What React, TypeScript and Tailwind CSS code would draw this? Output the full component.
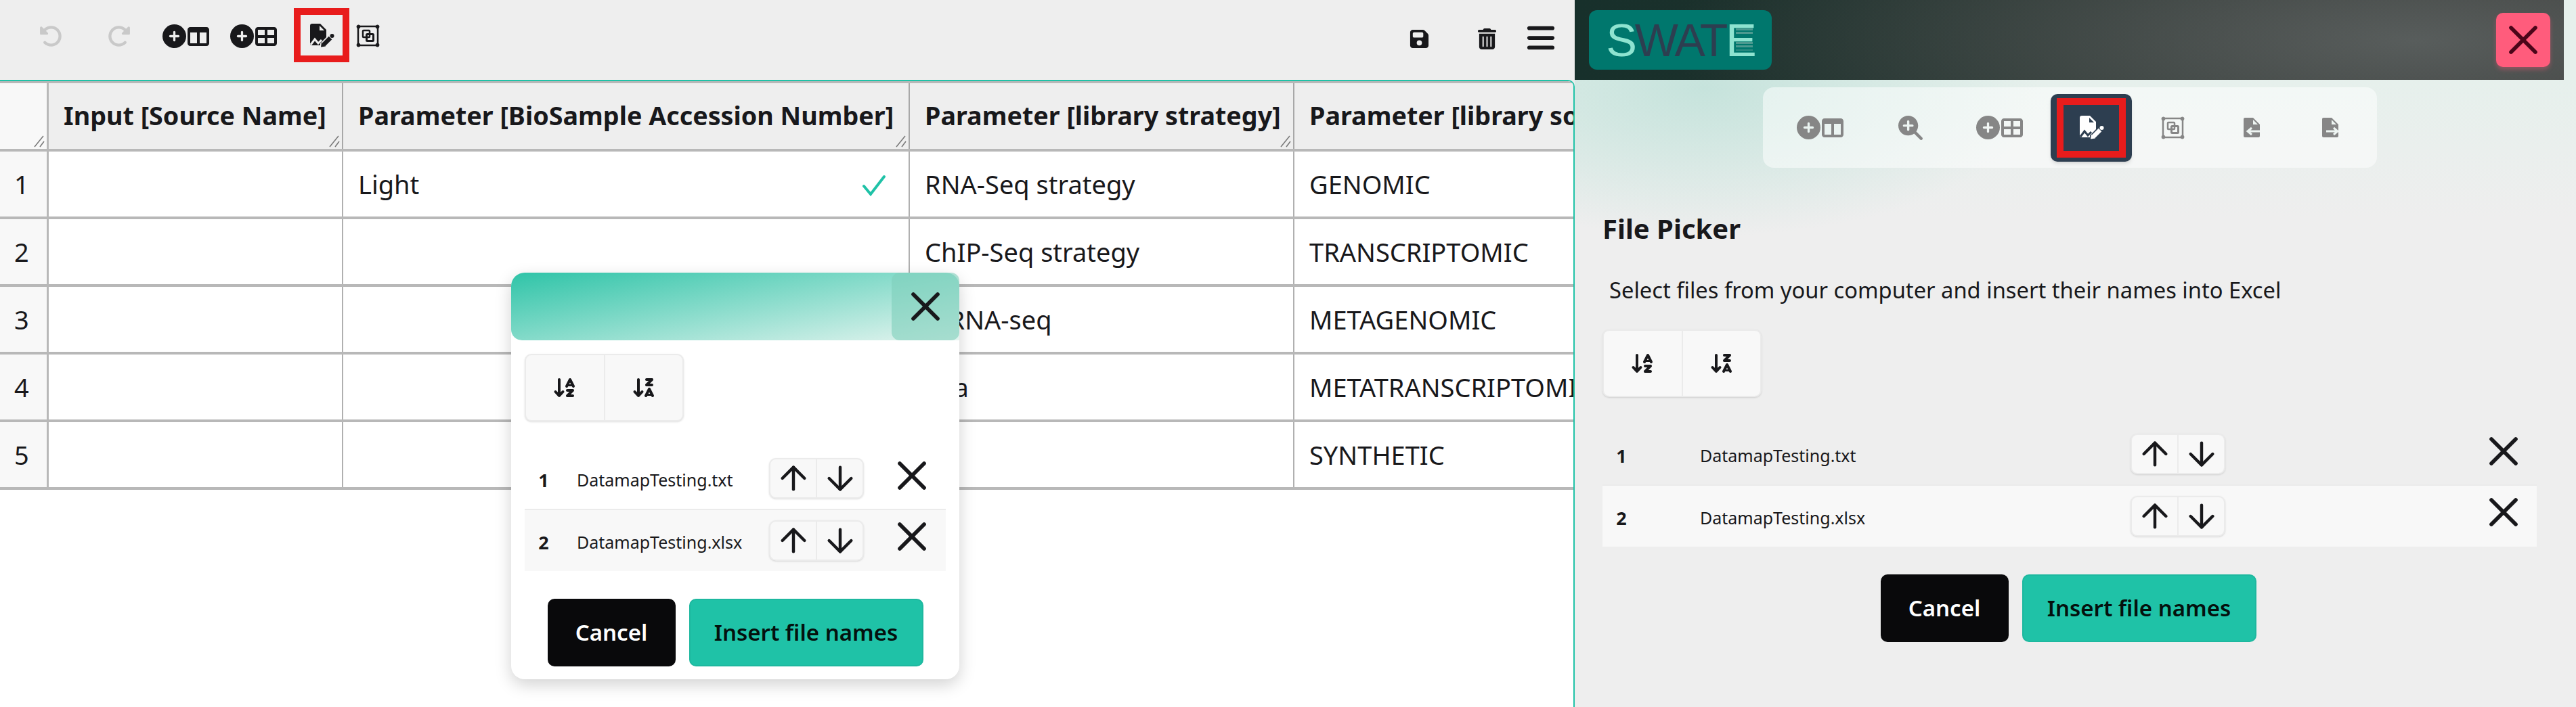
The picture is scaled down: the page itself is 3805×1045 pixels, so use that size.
import React from 'react';
import { ArrowDown, ArrowUp, X } from 'lucide-react';
import {
  FaRotateLeft,
  FaRotateRight,
  FaCirclePlus,
  FaTableColumns,
  FaTableCellsLarge,
  FaFloppyDisk,
  FaTrashCan,
  FaBars,
  FaMagnifyingGlassPlus,
  FaArrowDownAZ,
  FaArrowDownZA,
} from 'react-icons/fa6';

const columns = [
  { title: 'Input [Source Name]', width: 'w-[435px]' },
  { title: 'Parameter [BioSample Accession Number]', width: 'w-[837px]' },
  { title: 'Parameter [library strategy]', width: 'w-[568px]' },
  { title: 'Parameter [library source]', width: 'w-[560px]' },
];

const rows = [
  ['', 'Light', 'RNA-Seq strategy', 'GENOMIC'],
  ['', '', 'ChIP-Seq strategy', 'TRANSCRIPTOMIC'],
  ['', '', 'mRNA-seq', 'METAGENOMIC'],
  ['', '', 'Ota', 'METATRANSCRIPTOMIC'],
  ['', '', '', 'SYNTHETIC'],
];

const files = ['DatamapTesting.txt', 'DatamapTesting.xlsx'];

const ResizeGrip = () => (
  <svg className="absolute right-[2px] bottom-[2px]" width="18" height="18" viewBox="0 0 18 18" fill="none" stroke="#777" strokeWidth="1.5">
    <path d="M2 17 L15 1" />
    <path d="M10 17 L16 9" />
  </svg>
);

// file with a signature squiggle and a pen, cut = colour behind the icon
const FileSign = ({ cut }: { cut: string }) => (
  <svg width="37" height="35" viewBox="0 0 37 35">
    <path fill="currentColor" d="M1 3a3 3 0 0 1 3-3h12l9 9v11l-9 9v3H4a3 3 0 0 1-3-3z" />
    <path fill={cut} d="M15 3l7 7h-7z" />
    <path fill="none" stroke={cut} strokeWidth="3" d="M2 31l6-8 5 6 5-5" />
    <path fill="none" stroke="currentColor" strokeWidth="6.5" d="M21 31L31 21" />
    <path fill="currentColor" d="M17 34.5l1-7 6 6z" />
    <circle cx="33.5" cy="18" r="3" fill="currentColor" />
  </svg>
);

const ObjectFrame = () => (
  <svg width="35" height="34" viewBox="0 0 35 34" fill="none" stroke="currentColor">
    <rect x="3" y="3" width="29" height="28" strokeWidth="2.5" />
    <circle cx="3.5" cy="3.5" r="2.5" fill="currentColor" />
    <circle cx="31.5" cy="3.5" r="2.5" fill="currentColor" />
    <circle cx="3.5" cy="30.5" r="2.5" fill="currentColor" />
    <circle cx="31.5" cy="30.5" r="2.5" fill="currentColor" />
    <rect x="10" y="9" width="10" height="10" rx="1" strokeWidth="2.5" />
    <rect x="15.5" y="14.5" width="10" height="10" rx="1" strokeWidth="3" />
  </svg>
);

const FileArrow = ({ left }: { left?: boolean }) => (
  <svg width="24" height="29" viewBox="0 0 24 29">
    <path fill="currentColor" d="M2 0H14L24 10V27a2 2 0 0 1-2 2H2a2 2 0 0 1-2-2V2a2 2 0 0 1 2-2z" />
    <path fill="#eef5f2" d="M14 3l7 7h-7z" />
    <path
      fill="none"
      stroke="#eef5f2"
      strokeWidth="3"
      d={left ? 'M24 20H7M12 15l-6 5 6 5' : 'M6 20H22M17 15l6 5-6 5'}
    />
  </svg>
);

const SortGroup = () => (
  <div className="flex h-[100px] w-[235px] rounded-[10px] border-2 border-[#ebebeb] bg-[#f8f8f8] shadow-sm">
    <button className="flex flex-1 items-center justify-center border-r-2 border-[#ebebeb] text-[#18181b]">
      <FaArrowDownAZ size={36} />
    </button>
    <button className="flex flex-1 items-center justify-center text-[#18181b]">
      <FaArrowDownZA size={36} />
    </button>
  </div>
);

const FileRow = ({ index, name, shaded, nameClass }: { index: number; name: string; shaded: boolean; nameClass: string }) => (
  <div className={`flex items-center ${shaded ? 'h-[92px] border-t-2 border-[#ebebeb] bg-[#f8f8f8]' : 'h-[90px]'}`}>
    <span className="w-[56px] pt-[6px] text-center text-[27px] font-bold text-[#18181b]">{index}</span>
    <span className={`${nameClass} pt-[6px] text-[25px] text-[#18181b]`}>{name}</span>
    <div className="flex h-[60px] w-[140px] rounded-[10px] border-2 border-[#ebebeb] bg-[#f8f8f8] shadow-sm">
      <button className="flex flex-1 items-center justify-center border-r-2 border-[#ebebeb] text-[#18181b]">
        <ArrowUp size={56} strokeWidth={1.9} />
      </button>
      <button className="flex flex-1 items-center justify-center text-[#18181b]">
        <ArrowDown size={56} strokeWidth={1.9} />
      </button>
    </div>
  </div>
);

const FileList = ({ nameClass, closeOffset }: { nameClass: string; closeOffset: string }) => (
  <div>
    {files.map((f, i) => (
      <div key={f} className="relative">
        <FileRow index={i + 1} name={f} shaded={i === 1} nameClass={nameClass} />
        <span className={`absolute top-[5px] ${closeOffset} text-[#18181b]`}>
          <X size={72} strokeWidth={1.9} />
        </span>
      </div>
    ))}
  </div>
);

const ActionButtons = () => (
  <div className="flex justify-center gap-[20px]">
    <button className="h-[100px] w-[189px] rounded-[10px] bg-[#09090b] text-[33px] font-semibold text-white">Cancel</button>
    <button className="h-[100px] w-[346px] rounded-[10px] border-2 border-[#1db89f] bg-[#1fc2a7] text-[33px] font-semibold text-[#04110e]">
      Insert file names
    </button>
  </div>
);

const Table = () => (
  <div className="min-w-[2472px] border-t-[3px] border-[#b8b8b8]">
    <div className="flex h-[101px] border-b-4 border-[#b8b8b8]">
      <div className="relative h-full w-[72px] shrink-0 border-r-[3px] border-[#b8b8b8] bg-[#f8f8f8]">
        <ResizeGrip />
      </div>
      {columns.map((c) => (
        <div key={c.title} className={`relative flex h-full ${c.width} shrink-0 items-center border-r-2 border-[#a8a8a8] bg-[#eeeeee] pl-[22px] text-[37.7px] font-bold whitespace-nowrap text-[#18181b]`}>
          {c.title}
          <ResizeGrip />
        </div>
      ))}
    </div>
    {rows.map((row, i) => (
      <div key={i} className="flex h-[100px] border-b-4 border-[#b8b8b8]">
        <div className="flex h-full w-[72px] shrink-0 items-center border-r-[3px] border-[#b8b8b8] bg-[#f8f8f8] pl-[21px] text-[38px] text-[#18181b]">{i + 1}</div>
        {row.map((cell, j) => (
          <div key={j} className={`relative flex h-full ${columns[j].width} shrink-0 items-center border-r-2 border-[#b0b0b0] pl-[22px] text-[38px] whitespace-nowrap text-[#18181b]`}>
            {cell}
            {cell === 'Light' && (
              <svg className="absolute top-[34px] right-[33px]" width="36" height="32" viewBox="0 0 36 32" fill="none" stroke="#1fc2a7" strokeWidth="4" strokeLinecap="round">
                <path d="M3 17 L13 29 L33 3" />
              </svg>
            )}
          </div>
        ))}
      </div>
    ))}
  </div>
);

const AddColumnIcon = ({ cells }: { cells: boolean }) => (
  <span className="flex items-center gap-[2px]">
    <FaCirclePlus size={35} />
    {cells ? <FaTableCellsLarge size={32} /> : <FaTableColumns size={32} />}
  </span>
);

const App = () => (
  <div className="relative flex h-[1045px] w-[3805px] overflow-hidden bg-[#eeeeee] font-['Noto_Sans',sans-serif]">
    {/* main spreadsheet side */}
    <div className="flex w-[2326px] shrink-0 flex-col">
      <div className="flex h-[118px] shrink-0 items-start pt-[36px] pl-[58px] text-[#18181b]">
        <span className="w-[100px] text-[#c9c9c9]"><FaRotateLeft size={35} /></span>
        <span className="w-[82px] text-[#c9c9c9]"><FaRotateRight size={35} /></span>
        <span className="w-[100px]"><AddColumnIcon cells={false} /></span>
        <span className="w-[94px]"><AddColumnIcon cells /></span>
        <span className="mt-[-24px] flex h-[80px] w-[82px] items-center justify-center border-10 border-[#e81c1c]">
          <FileSign cut="#eeeeee" />
        </span>
        <span className="ml-[10px]"><ObjectFrame /></span>
        <span className="ml-auto flex items-center pr-[27px]">
          <span className="w-[100px]"><FaFloppyDisk size={31} /></span>
          <span className="w-[72px]"><FaTrashCan size={31} /></span>
          <FaBars size={46} className="mt-[-3px]" />
        </span>
      </div>
      <div className="flex-1 overflow-hidden rounded-tr-[10px] border-t-2 border-r-2 border-[#1fc2a7] bg-white">
        <Table />
      </div>
    </div>

    {/* side panel */}
    <div className="flex flex-1 flex-col bg-[radial-gradient(ellipse_500px_220px_at_190px_130px,#c6e3dc,transparent),linear-gradient(180deg,#e6f0ec_118px,#eeeeee_320px)]">
      <div className="flex h-[118px] w-[1461px] shrink-0 items-center justify-between bg-[radial-gradient(ellipse_1100px_260px_at_1240px_60px,#585d5c,transparent),linear-gradient(90deg,#17302b,#33322f_100%)] pr-[20px] pl-[21px]">
        <div className="relative flex h-[88px] w-[270px] items-center justify-center rounded-[12px] bg-[#00776d] font-['Liberation_Sans',sans-serif] text-[68px] leading-none tracking-[-3px]">
          <span className="text-[#8ee3d0]">S</span>
          <span className="text-[#2d3e50]">WAT</span>
          <span className="text-[#8ee3d0]">E</span>
          <svg className="absolute top-[26px] left-[217px]" width="25" height="37" viewBox="0 0 25 37" fill="#4c9a90">
            <rect x="0" y="1" width="25" height="3" />
            <rect x="0" y="6" width="25" height="3" />
            <rect x="0" y="21" width="25" height="3" />
            <rect x="0" y="26" width="25" height="3" />
            <rect x="0" y="32" width="25" height="2" opacity="0.6" />
          </svg>
        </div>
        <button className="flex h-[80px] w-[80px] items-center justify-center rounded-[10px] bg-[#ff5c7c] text-[#4c0519] shadow-[0_4px_6px_rgba(255,92,124,0.35)]">
          <X size={72} strokeWidth={1.9} />
        </button>
      </div>

      <div className="mt-[11px] ml-[278px] flex h-[119px] w-[907px] shrink-0 items-center self-start rounded-[16px] bg-white/50 pl-[50px] text-[#868686]">
        <span className="w-[150px]"><AddColumnIcon cells={false} /></span>
        <span className="w-[115px]"><FaMagnifyingGlassPlus size={36} /></span>
        <span className="w-[110px]"><AddColumnIcon cells /></span>
        <span className="flex h-[100px] w-[120px] items-center justify-center rounded-[10px] bg-[#2d3e50] px-[9px] py-[5px] shadow-md">
          <span className="flex h-[88px] w-[103px] items-center justify-center border-10 border-[#e81c1c] text-white">
            <FileSign cut="#2d3e50" />
          </span>
        </span>
        <span className="w-[165px] pl-[43px]"><ObjectFrame /></span>
        <span className="w-[116px]"><FileArrow left /></span>
        <span><FileArrow /></span>
      </div>

      <div className="flex flex-col pt-[62px] pr-[58px] pl-[41px]">
        <h1 className="text-[40px] leading-[56px] font-bold text-[#18181b]">File Picker</h1>
        <p className="mt-[40px] pl-[10px] text-[32.7px] leading-[46px] text-[#18181b]">Select files from your computer and insert their names into Excel</p>
        <div className="mt-[35px]"><SortGroup /></div>
        <div className="mt-[39px]"><FileList nameClass="w-[724px] pl-[88px]" closeOffset="left-[1295px]" /></div>
        <div className="mt-[41px] pr-[4px]"><ActionButtons /></div>
      </div>
    </div>

    {/* widget floating over the table */}
    <div className="absolute top-[403px] left-[755px] flex h-[601px] w-[662px] flex-col rounded-[20px] bg-white shadow-[0_8px_24px_rgba(0,0,0,0.18)]">
      <div className="flex h-[100px] justify-end rounded-t-[20px] rounded-bl-[16px] bg-[linear-gradient(170deg,#2fc4a8,#e4f4ef)]">
        <button className="flex h-[100px] w-[100px] items-center justify-center rounded-[12px] bg-[#7fcfbb]/60 text-[#18181b]">
          <X size={72} strokeWidth={1.9} />
        </button>
      </div>
      <div className="flex flex-col px-[20px] pt-[20px]">
        <SortGroup />
        <div className="mt-[39px]"><FileList nameClass="w-[305px] pl-[21px]" closeOffset="left-[536px]" /></div>
        <div className="mt-[41px]"><ActionButtons /></div>
      </div>
    </div>
  </div>
);

export default App;
